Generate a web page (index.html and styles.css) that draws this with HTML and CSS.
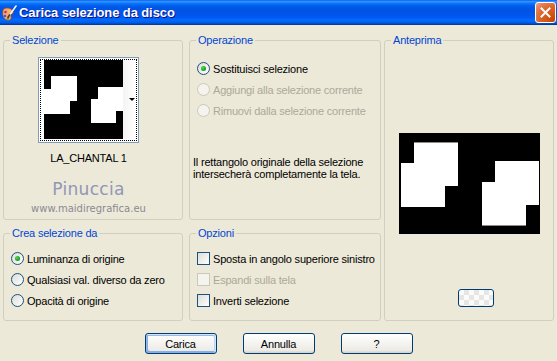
FILE: index.html
```html
<!DOCTYPE html>
<html lang="it">
<head>
<meta charset="UTF-8">
<meta name="viewport" content="width=device-width, initial-scale=1.0">
<title>Carica selezione da disco</title>
<link rel="stylesheet" href="styles.css">
</head>
<body>
    <div class="window">
        <div class="titlebar">
            <svg class="app-icon" width="16" height="18" viewBox="0 0 16 18">
                <path d="M2 6 C1 10 2 15 6 16 C9 17 11 15 10 12 C9 10 11 9 12 10 C13 7 10 4 7 4 C5 4 3 4 2 6 Z" fill="#f2a679" stroke="#8c4a2b" stroke-width="0.8"/>
                <circle cx="4.5" cy="8" r="1.2" fill="#d8262a"/>
                <circle cx="4" cy="12" r="1.2" fill="#2a5fd8"/>
                <circle cx="7" cy="14.2" r="1.1" fill="#2e9a35"/>
                <circle cx="8" cy="7" r="1" fill="#f5d23a"/>
                <path d="M8 12 L15 2" stroke="#f4f4f4" stroke-width="1.6" stroke-linecap="round"/>
                <path d="M7.2 13 L8.6 11" stroke="#5a3a1a" stroke-width="1.8" stroke-linecap="round"/>
            </svg>
            <span class="title">Carica selezione da disco</span>
            <button class="close-btn" type="button" aria-label="Chiudi">
                <svg width="11" height="11" viewBox="0 0 11 11">
                    <path d="M1.5 1.5 L9.5 9.5 M9.5 1.5 L1.5 9.5" stroke="#fff" stroke-width="2" stroke-linecap="square"/>
                </svg>
            </button>
        </div>

        <div class="client">
            <div class="groups">
                <fieldset class="group group-selezione">
                    <legend>Selezione</legend>
                    <div class="group-body selezione-body">
                        <div class="thumb">
                            <div class="thumb-focus">
                                <svg class="thumb-image" width="79" height="79" viewBox="0 0 79 79">
                                    <rect width="79" height="79" fill="#000"/>
                                    <rect x="7" y="16" width="26" height="25" fill="#fff"/>
                                    <rect x="0" y="29" width="26" height="25" fill="#fff"/>
                                    <rect x="54" y="27" width="25" height="24" fill="#fff"/>
                                    <rect x="47" y="39" width="25" height="24" fill="#fff"/>
                                </svg>
                                <div class="thumb-arrow"><span class="arrow-down"></span></div>
                            </div>
                        </div>
                        <div class="thumb-name">LA_CHANTAL 1</div>
                        <div class="watermark">
                            <span class="wm-name">Pinuccia</span>
                            <span class="wm-site">www.maidiregrafica.eu</span>
                        </div>
                    </div>
                </fieldset>

                <fieldset class="group group-operazione">
                    <legend>Operazione</legend>
                    <div class="group-body options-body">
                        <label class="option"><span class="radio checked"></span>Sostituisci selezione</label>
                        <label class="option disabled"><span class="radio"></span>Aggiungi alla selezione corrente</label>
                        <label class="option disabled"><span class="radio"></span>Rimuovi dalla selezione corrente</label>
                        <p class="note">Il rettangolo originale della selezione<br>intersecherà completamente la tela.</p>
                    </div>
                </fieldset>

                <fieldset class="group group-anteprima">
                    <legend>Anteprima</legend>
                    <div class="group-body anteprima-body">
                        <svg class="preview" width="141" height="101" viewBox="0 0 141 101">
                            <rect width="141" height="101" fill="#000"/>
                            <rect x="15" y="9" width="44" height="44" fill="#fff"/>
                            <rect x="2" y="30" width="44" height="44" fill="#fff"/>
                            <rect x="96" y="28" width="44" height="44" fill="#fff"/>
                            <rect x="83" y="49" width="44" height="44" fill="#fff"/>
                            <rect x="15" y="9" width="44" height="1" fill="#8a8a8a"/>
                            <rect x="83" y="92" width="44" height="1" fill="#8a8a8a"/>
                        </svg>
                        <button class="mini-btn" type="button" aria-label="Sfondo"></button>
                    </div>
                </fieldset>

                <fieldset class="group group-crea">
                    <legend>Crea selezione da</legend>
                    <div class="group-body options-body tight">
                        <label class="option"><span class="radio checked"></span>Luminanza di origine</label>
                        <label class="option"><span class="radio"></span>Qualsiasi val. diverso da zero</label>
                        <label class="option"><span class="radio"></span>Opacità di origine</label>
                    </div>
                </fieldset>

                <fieldset class="group group-opzioni">
                    <legend>Opzioni</legend>
                    <div class="group-body options-body tight">
                        <label class="option"><span class="checkbox"></span>Sposta in angolo superiore sinistro</label>
                        <label class="option disabled"><span class="checkbox"></span>Espandi sulla tela</label>
                        <label class="option"><span class="checkbox"></span>Inverti selezione</label>
                    </div>
                </fieldset>
            </div>

            <div class="buttons">
                <button class="btn default" type="button">Carica</button>
                <button class="btn" type="button">Annulla</button>
                <button class="btn" type="button">?</button>
            </div>
        </div>
    </div>
</body>
</html>
```

FILE: styles.css
```css
body {
    margin: 0;
    font-family: 'Liberation Sans', Arial, sans-serif;
    font-size: 11px;
    letter-spacing: -0.2px;
    color: #000;
}

.window {
    width: 557px;
    height: 361px;
    background-color: #ece9d8;
    overflow: hidden;
}

/* title bar */
.titlebar {
    height: 25px;
    display: flex;
    align-items: center;
    background: linear-gradient(180deg, #0058ee 0%, #3593ff 5%, #288eff 8%, #127dff 12%, #036ffc 16%, #0262ee 22%, #0057e5 30%, #0054e3 40%, #0055eb 60%, #005bf5 70%, #026afe 80%, #0062ef 88%, #0052d6 93%, #0040ab 97%, #003092 100%);
}

.app-icon {
    margin-left: 1px;
    margin-right: 2px;
}

.title {
    flex: 1;
    color: #fff;
    font-weight: bold;
    font-size: 13px;
    text-shadow: 1px 1px #0f1089;
    letter-spacing: -0.1px;
}

.close-btn {
    width: 21px;
    height: 21px;
    margin-right: 1px;
    padding: 0;
    display: flex;
    align-items: center;
    justify-content: center;
    border: 1px solid #fff;
    border-radius: 3px;
    background: radial-gradient(circle at 90% 90%, #cc4600 0%, #dc6527 55%, #e5805a 80%, #f0a684 100%);
}

/* group boxes */
.client {
    padding: 9px 0 0 3px;
}

.groups {
    display: grid;
    grid-template-columns: 180px 198px 173px;
    grid-template-rows: 186px 94px;
    row-gap: 7px;
}

.group {
    margin: 0;
    padding: 0;
    min-width: 0;
    border: 1px solid #d0d0bf;
    border-radius: 3px;
}

.group legend {
    margin-left: 6px;
    padding: 0 2px;
    line-height: 13px;
    color: #0046d5;
}

.group-operazione,
.group-opzioni {
    margin-left: 6px;
}

.group-anteprima {
    grid-column: 3;
    grid-row: 1 / span 2;
    margin-left: 3px;
}

.group-crea {
    grid-column: 1;
    grid-row: 2;
}

.group-opzioni {
    grid-column: 2;
    grid-row: 2;
}

/* selezione */
.selezione-body {
    display: flex;
    flex-direction: column;
    align-items: center;
    padding: 10px 9px 0 0;
}

.thumb {
    border: 1px solid #7f9db9;
    padding: 1px;
    background-color: #fff;
}

.thumb-focus {
    display: flex;
    border: 1px dotted #000;
    padding: 0 0 1px 3px;
}

.thumb-arrow {
    width: 13px;
    display: flex;
    align-items: center;
    justify-content: flex-end;
    background: linear-gradient(90deg, #f4f4f4, #fff);
}

.arrow-down {
    width: 0;
    height: 0;
    margin-right: 1px;
    border-left: 3px solid transparent;
    border-right: 3px solid transparent;
    border-top: 3px solid #000;
}

.thumb-name {
    margin-top: 9px;
    line-height: 13px;
}

.watermark {
    display: flex;
    flex-direction: column;
    align-items: center;
    margin-top: 14px;
}

.wm-name {
    font-family: 'DejaVu Sans', sans-serif;
    font-size: 17px;
    line-height: 20px;
    letter-spacing: 0.3px;
    color: #9196b7;
}

.wm-site {
    margin-top: 3px;
    font-family: 'DejaVu Sans', sans-serif;
    font-size: 10px;
    line-height: 13px;
    letter-spacing: 0;
    color: #8a8a94;
}

/* radios and checkboxes */
.options-body {
    padding: 11px 0 0 7px;
}

.options-body.tight {
    padding-top: 8px;
}

.option {
    display: flex;
    align-items: center;
    height: 21px;
    white-space: nowrap;
}

.option.disabled {
    color: #aca899;
}

.radio {
    width: 13px;
    height: 13px;
    margin-right: 3px;
    box-sizing: border-box;
    border: 1px solid #1c5180;
    border-radius: 50%;
    background: linear-gradient(135deg, #dcdcd7, #fff);
    display: flex;
    align-items: center;
    justify-content: center;
}

.radio.checked::after {
    content: "";
    width: 5px;
    height: 5px;
    border-radius: 50%;
    background: radial-gradient(circle at 35% 35%, #55d655, #21a121 60%, #1a7e1a);
}

.checkbox {
    width: 13px;
    height: 13px;
    margin-right: 3px;
    box-sizing: border-box;
    border: 1px solid #1c5180;
    background: linear-gradient(135deg, #dcdcd7, #fff);
}

.option.disabled .radio,
.option.disabled .checkbox {
    border-color: #cac8bb;
    background: #f4f3ee;
}

.note {
    margin: 35px 0 0 -4px;
    line-height: 12px;
}

/* anteprima */
.anteprima-body {
    display: flex;
    flex-direction: column;
    align-items: center;
    padding-top: 86px;
}

.mini-btn {
    width: 36px;
    height: 18px;
    margin: 55px 0 0 14px;
    padding: 0;
    border: 1px solid #003c74;
    border-radius: 3px;
    background: conic-gradient(#e6e6e3 25%, #fbfbfb 0 50%, #e6e6e3 0 75%, #fbfbfb 0) 0 0 / 10px 10px;
}

/* bottom buttons */
.buttons {
    display: flex;
    justify-content: center;
    gap: 26px;
    margin-top: 12px;
    padding-right: 3px;
}

.btn {
    width: 72px;
    height: 21px;
    padding: 0;
    font-family: 'Liberation Sans', Arial, sans-serif;
    font-size: 11px;
    letter-spacing: -0.2px;
    color: #000;
    border: 1px solid #003c74;
    border-radius: 3px;
    background: linear-gradient(180deg, #fff 0%, #ecebe6 86%, #d6d0c5 100%);
}

.btn.default {
    box-shadow: inset -1px 1px #cee7ff, inset 1px 2px #98b8ea, inset -2px 2px #bcd4f6, inset 1px -1px #89ade4, inset 2px -2px #89ade4;
}
```
